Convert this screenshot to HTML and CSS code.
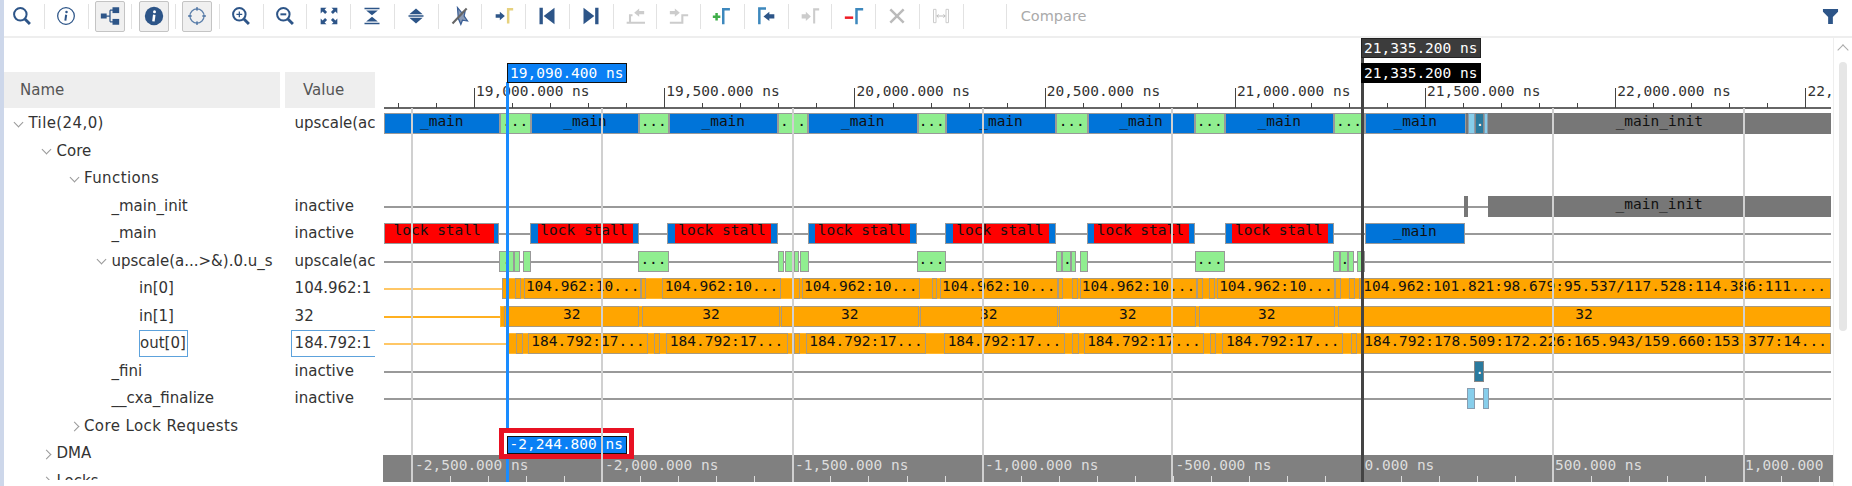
FILE: index.html
```html
<!DOCTYPE html>
<html lang="en">
<head>
  <meta charset="UTF-8">
  <title>Waveform</title>
  <link rel="stylesheet" href="styles.css">
</head>
<body>
  <div class="toolbar">
    <div class="tb first"><svg viewBox="0 0 24 24"><circle cx="10" cy="10" r="7.5" class="st"/><path d="M15.5 15.5l6 6" class="st thick"/></svg></div><i class="sep"></i>
    <div class="tb"><svg viewBox="0 0 24 24"><circle cx="12" cy="12" r="10" class="st thin"/><circle cx="12.6" cy="7.2" r="1.5" class="fl"/><path d="M12.2 10.5l-1 7" class="st"/></svg></div><i class="sep"></i>
    <div class="tb"><div class="on"><svg viewBox="0 0 24 24"><path d="M6 12h6M12 5v14M12 5h4M12 19h4" class="st thin"/><rect x="1" y="9" width="7" height="6" class="fl"/><rect x="15" y="1.500" width="8" height="7" class="fl"/><rect x="15" y="15.500" width="8" height="7" class="fl"/></svg></div></div><i class="sep"></i>
    <div class="tb"><div class="on"><svg viewBox="0 0 24 24"><circle cx="12" cy="12" r="11" class="fl"/><circle cx="12.6" cy="6.800" r="1.800" fill="#fff"/><path d="M12.300 10.500l-1 8" stroke="#fff" stroke-width="3" fill="none"/></svg></div></div><i class="sep"></i>
    <div class="tb"><div class="on"><svg viewBox="0 0 24 24"><circle cx="12" cy="12" r="8.500" class="st thin soft"/><path d="M12 1.500v4M12 18.500v4M1.500 12h4M18.500 12h4" class="st soft"/></svg></div></div><i class="sep"></i>
    <div class="tb"><svg viewBox="0 0 24 24"><circle cx="10" cy="10" r="7.500" class="st"/><path d="M15.500 15.500l6 6" class="st thick"/><path d="M10 6.500v7M6.500 10h7" class="st thin"/></svg></div><i class="sep"></i>
    <div class="tb"><svg viewBox="0 0 24 24"><circle cx="10" cy="10" r="7.500" class="st"/><path d="M15.500 15.500l6 6" class="st thick"/><path d="M6.500 10h7" class="st"/></svg></div><i class="sep"></i>
    <div class="tb"><svg viewBox="0 0 24 24"><path d="M2 2h7l-2.300 2.300 3 3-2.400 2.400-3-3L2 9zM22 2v7l-2.300-2.300-3 3-2.400-2.400 3-3L15 2zM2 22v-7l2.300 2.300 3-3 2.400 2.400-3 3L9 22zM22 22h-7l2.300-2.300-3-3 2.400-2.400 3 3L22 15z" class="fl"/></svg></div><i class="sep"></i>
    <div class="tb"><svg viewBox="0 0 24 24"><path d="M3 2h18v2H3zM5 5.500h14L12 11zM12 13l7 5.500H5zM3 20h18v2H3z" class="fl"/></svg></div><i class="sep"></i>
    <div class="tb"><svg viewBox="0 0 24 24"><path d="M12 3l8 7H4zM3 11h18v2H3zM4 14h16l-8 7z" class="fl"/></svg></div><i class="sep"></i>
    <div class="tb"><svg viewBox="0 0 24 24"><path d="M9 2l5 6 4-1-1 5 4 6-6-1-2 5-3-7z" fill="#8a9ab5" stroke="#3b5f96" stroke-width="1.500"/><path d="M3 21L20 3" stroke="#666" stroke-width="2.500"/></svg></div><i class="sep"></i>
    <div class="tb"><svg viewBox="0 0 24 24"><path d="M2 10h5V7l6 5-6 5v-3H2z" class="fl"/><path d="M17 21V4h6" fill="none" stroke="#e6d17e" stroke-width="3"/></svg></div><i class="sep"></i>
    <div class="tb"><svg viewBox="0 0 24 24"><path d="M3 2h4v20H3zM21 2v20L8 12z" class="fl"/></svg></div><i class="sep"></i>
    <div class="tb"><svg viewBox="0 0 24 24"><path d="M21 2h-4v20h4zM3 2v20l13-10z" class="fl"/></svg></div><i class="sep"></i>
    <div class="tb"><svg viewBox="0 0 24 24"><path d="M2 20h22M6 20v-9h3" fill="none" stroke="#ccc" stroke-width="2.500"/><path d="M23 6h-6V3l-6 5 6 5v-3h6z" fill="#ccc"/></svg></div><i class="sep"></i>
    <div class="tb"><svg viewBox="0 0 24 24"><path d="M1 20h15v-9h7" fill="none" stroke="#ccc" stroke-width="2.500"/><path d="M1 6h6V3l6 5-6 5v-3H1z" fill="#ccc"/></svg></div><i class="sep"></i>
    <div class="tb"><svg viewBox="0 0 24 24"><path d="M1 13h9M5.500 8.500v9" stroke="#3fae49" stroke-width="3" fill="none"/><path d="M13.500 22V4h8" fill="none" stroke="#3d88bd" stroke-width="3"/></svg></div><i class="sep"></i>
    <div class="tb"><svg viewBox="0 0 24 24"><path d="M4 22V3h8" fill="none" stroke="#3d88bd" stroke-width="3"/><path d="M22 10h-6V7l-7 5.500 7 5.500v-3h6z" class="fl"/></svg></div><i class="sep"></i>
    <div class="tb"><svg viewBox="0 0 24 24"><path d="M2 10h5V7l6 5.500-6 5.500v-3H2z" fill="#ccc"/><path d="M17 21V4h6" fill="none" stroke="#ccc" stroke-width="2.500"/></svg></div><i class="sep"></i>
    <div class="tb"><svg viewBox="0 0 24 24"><path d="M1 14h10" stroke="#ee1c25" stroke-width="3"/><path d="M15 22V4h8" fill="none" stroke="#3d88bd" stroke-width="3"/></svg></div><i class="sep"></i>
    <div class="tb"><svg viewBox="0 0 24 24"><path d="M4 4l16 16M20 4L4 20" stroke="#bbb" stroke-width="3"/></svg></div><i class="sep"></i>
    <div class="tb"><svg viewBox="0 0 24 24"><path d="M3 4h3v16H3zM18 4h3v16h-3z" fill="none" stroke="#ccc" stroke-width="1.200"/><path d="M7 12h10M9 10l-2 2 2 2M15 10l2 2-2 2" fill="none" stroke="#bbb" stroke-width="1.200"/></svg></div><i class="sep"></i>
    <div class="tb"></div><i class="sep"></i>
    <span class="compare">Compare</span>
    <svg class="filter" viewBox="0 0 18 18"><path d="M1 1h16v3l-5.500 5.500V17h-5V9.500L1 4z" class="fl"/></svg>
  </div>

  <div class="main">
    <div class="names">
      <div class="heads">
        <div class="head-name">Name</div>
        <div class="head-value">Value</div>
      </div>
      <div class="row"><div class="name lv0 wide"><span class="slot"><i class="chev"></i></span>Tile(24,0)</div><div class="value">upscale(ac</div></div>
      <div class="row"><div class="name lv1"><span class="slot"><i class="chev"></i></span>Core</div><div class="value"></div></div>
      <div class="row"><div class="name lv2 wide"><span class="slot"><i class="chev"></i></span>Functions</div><div class="value"></div></div>
      <div class="row"><div class="name lv3"><span class="slot"></span>_main_init</div><div class="value">inactive</div></div>
      <div class="row"><div class="name lv3"><span class="slot"></span>_main</div><div class="value">inactive</div></div>
      <div class="row"><div class="name lv2b"><span class="slot"><i class="chev"></i></span>upscale(a...&gt;&amp;).0.u_s</div><div class="value">upscale(ac</div></div>
      <div class="row"><div class="name lv4"><span class="slot"></span>in[0]</div><div class="value">104.962:1</div></div>
      <div class="row"><div class="name lv4"><span class="slot"></span>in[1]</div><div class="value">32</div></div>
      <div class="row"><div class="name lv4"><span class="slot"></span><span class="picked">out[0]</span></div><div class="value"><span class="picked-value">184.792:1</span></div></div>
      <div class="row"><div class="name lv3"><span class="slot"></span>_fini</div><div class="value">inactive</div></div>
      <div class="row"><div class="name lv3"><span class="slot"></span>__cxa_finalize</div><div class="value">inactive</div></div>
      <div class="row"><div class="name lv2 wide"><span class="slot"><i class="chev closed"></i></span>Core Lock Requests</div><div class="value"></div></div>
      <div class="row"><div class="name lv1"><span class="slot"><i class="chev closed"></i></span>DMA</div><div class="value"></div></div>
      <div class="row"><div class="name lv1"><span class="slot"><i class="chev closed"></i></span>Locks</div><div class="value"></div></div>
    </div>

    <div class="wave" id="wave">
      <div class="wave-head" id="waveHead"></div>
      <div id="tracks"></div>
      <div class="ruler" id="ruler"></div>
      <div class="cursor-blue"></div>
      <div class="cursor-black"></div>
      <div class="time time-blue">19,090.400 ns</div>
      <div class="time time-dark">21,335.200 ns</div>
      <div class="time time-black">21,335.200 ns</div>
      <div class="delta"><div class="delta-label">-2,244.800 ns</div></div>
    </div>

    <div class="scrollbar">
      <i class="up"></i>
      <div class="thumb"></div>
    </div>
  </div>

  <script src="script.js"></script>
</body>
</html>
```

FILE: styles.css
```css
body {
  margin: 0;
  height: 486px;
  overflow: hidden;
  border-left: 4px solid #cdd7ea;
  background-color: #fff;
  font-family: "DejaVu Sans", sans-serif;
  font-size: 15px;
  color: #333;
}

/* toolbar */
.toolbar {
  display: flex;
  align-items: center;
  height: 32px;
  margin-left: -3px;
  padding-right: 13px;
  padding-bottom: 4px;
  border-bottom: 2px solid #eee;
}

.tb {
  display: flex;
  align-items: center;
  justify-content: center;
  flex: none;
  width: 42.75px;
  height: 32px;
}

.tb svg {
  display: block;
  width: 20px;
  height: 20px;
}

.on {
  display: flex;
  align-items: center;
  justify-content: center;
  box-sizing: border-box;
  width: 30px;
  height: 31px;
  border: 1px solid #c4c4c4;
  border-radius: 2px;
  background-color: #f0f0f0;
}

.sep {
  flex: none;
  width: 1px;
  height: 25px;
  background-color: #e2e2e2;
}

.compare {
  margin-left: 13.500px;
  font-size: 14.500px;
  color: #aaa;
}

.filter {
  width: 17px;
  height: 17px;
  margin-left: auto;
}

.fl {
  fill: #2d5588;
}

.st {
  fill: none;
  stroke: #2d5588;
  stroke-width: 2.400;
}

.st.thin {
  stroke-width: 1.500;
}

.st.thick {
  stroke-width: 3.500;
}

.st.soft {
  stroke: #5d80ab;
}

/* main area */
.main {
  display: flex;
  height: 448px;
}

.names {
  flex: none;
  width: 379px;
  height: 442px;
  overflow: hidden;
}

.heads {
  display: flex;
  gap: 5px;
  height: 36px;
  margin-top: 34px;
  margin-bottom: 2.300px;
  line-height: 36px;
  color: #555;
}

.head-name {
  width: 260px;
  padding-left: 16px;
  background-color: #eee;
}

.head-value {
  width: 72px;
  padding-left: 18px;
  background-color: #eee;
}

.row {
  display: flex;
  gap: 5px;
  height: 27.500px;
  line-height: 27px;
  white-space: nowrap;
}

.name {
  display: flex;
  width: 276px;
  box-sizing: border-box;
  overflow: hidden;
}

.wide { letter-spacing: 0.400px; }

.lv0 { padding-left: 4.500px; }
.lv1 { padding-left: 32.500px; }
.lv2 { padding-left: 60px; }
.lv2b { padding-left: 87.500px; }
.lv3 { padding-left: 87.500px; }
.lv4 { padding-left: 115px; }

.slot {
  display: flex;
  align-items: center;
  justify-content: center;
  flex: none;
  width: 20px;
}

.chev {
  width: 6px;
  height: 6px;
  margin-top: -4px;
  border-right: 1.300px solid #999;
  border-bottom: 1.300px solid #999;
  transform: rotate(45deg);
}

.chev.closed {
  margin-top: 0;
  transform: rotate(-45deg);
}

.value {
  width: 90px;
  box-sizing: border-box;
  padding-left: 9.600px;
  overflow: hidden;
}

.picked {
  box-sizing: border-box;
  height: 27px;
  line-height: 25px;
  padding-right: 1px;
  border: 1px solid #5da2dc;
}

.value:has(.picked-value) {
  padding-left: 5.600px;
}

.picked-value {
  display: block;
  box-sizing: border-box;
  width: 90px;
  height: 27px;
  line-height: 25px;
  padding-left: 3px;
  border: 1px solid #5da2dc;
}

/* waveform */
.wave {
  position: relative;
  display: flex;
  flex-direction: column;
  flex: none;
  width: 1450px;
  height: 444px;
  overflow: hidden;
  font-family: "DejaVu Sans Mono", monospace;
  font-size: 14.500px;
  color: #111;
}

.wave-head {
  position: relative;
  flex: none;
  height: 72.300px;
}

.baseline {
  position: absolute;
  left: 1px;
  width: 1447px;
  top: 69px;
  height: 2px;
  background-color: #666;
}

.tick {
  position: absolute;
  top: 65px;
  width: 1px;
  height: 5px;
  background-color: #444;
}

.tick.major {
  top: 50px;
  height: 20px;
}

.tick-label {
  position: absolute;
  top: 44px;
  line-height: 18px;
  color: #333;
  white-space: nowrap;
}

.track {
  position: relative;
  height: 27.500px;
}

.line {
  position: absolute;
  top: 12.800px;
  height: 2px;
}

.seg {
  position: absolute;
  top: 3px;
  height: 21px;
  box-sizing: border-box;
  border: 1.500px solid #999;
  overflow: hidden;
  line-height: 15px;
  text-align: center;
  white-space: nowrap;
}

.seg.blue { background-color: #0074d9; }
.seg.green { background-color: #90ee90; }
.seg.gray { background-color: #777; border-color: #777; }
.seg.sky { background-color: #87ceeb; border-color: #889db0; }
.seg.teal { background-color: #2a7a9e; border-color: #888; color: #fff; }
.seg.orange { background-color: #ffa500; border-color: #a89a80; }
.seg.band { background-color: #ffa500; border-color: #ffb733; }

.stall {
  position: absolute;
  top: -1.500px;
  bottom: -1.500px;
  padding-right: 3px;
  border-top: 1.500px solid #999;
  border-bottom: 1.500px solid #999;
  box-sizing: border-box;
  line-height: 13px;
  background-color: #f00;
}

.ruler {
  position: relative;
  flex: none;
  margin-top: auto;
  height: 27.300px;
  background-color: #808080;
  color: #ddd;
}

.ruler-tick {
  position: absolute;
  bottom: 0;
  width: 1px;
  height: 6px;
  background-color: #ddd;
}

.ruler-label {
  position: absolute;
  top: 1px;
  line-height: 18px;
  white-space: nowrap;
}

.grid {
  position: absolute;
  top: 70px;
  bottom: 0;
  width: 2px;
  background-color: #d0d0d0;
}

.cursor-blue {
  position: absolute;
  left: 123px;
  top: 44px;
  bottom: 0;
  width: 3px;
  background-color: #1a8cff;
}

.cursor-black {
  position: absolute;
  left: 977.500px;
  top: 20px;
  bottom: 0;
  width: 3px;
  background-color: #444;
}

.time {
  position: absolute;
  box-sizing: border-box;
  width: 120px;
  height: 20px;
  padding-left: 2px;
  line-height: 18px;
  color: #fff;
  white-space: nowrap;
}

.time-blue {
  left: 124px;
  top: 25px;
  border: 1px solid #111;
  background-color: #0a80f5;
}

.time-dark {
  left: 978px;
  top: 0;
  border: 1px solid #222;
  background-color: #3c3c3c;
}

.time-black {
  left: 978px;
  top: 25px;
  border: 1px solid #000;
  background-color: #000;
}

.delta {
  position: absolute;
  left: 116px;
  top: 390px;
  box-sizing: border-box;
  width: 135px;
  height: 31px;
  padding: 2.500px 2.500px 0 2.500px;
  border: 5px solid #e81123;
  background-color: #fff;
}

.delta-label {
  box-sizing: border-box;
  height: 18px;
  padding-left: 2px;
  border: 1px solid #111;
  line-height: 14px;
  color: #fff;
  background-color: #0a80f5;
  white-space: nowrap;
}

/* scrollbar */
.scrollbar {
  display: flex;
  flex-direction: column;
  align-items: center;
  flex: 1;
  border-left: 1px solid #eee;
}

.up {
  width: 7px;
  height: 7px;
  margin-top: 8px;
  border-top: 1.500px solid #aaa;
  border-left: 1.500px solid #aaa;
  transform: rotate(45deg);
}

.thumb {
  width: 8px;
  height: 269px;
  margin-top: 8px;
  border-radius: 4px;
  background-color: #e6e6e6;
}
```

FILE: script.js
```js
// page x of the left edge of the wave panel
const X0 = 383;
const wave = document.getElementById('wave');
const waveHead = document.getElementById('waveHead');
const ruler = document.getElementById('ruler');
const tracksEl = document.getElementById('tracks');

function add(parent, cls, left, width, text) {
  const el = document.createElement('div');
  el.className = cls;
  el.style.left = (left - X0) + 'px';
  if (width !== null) el.style.width = width + 'px';
  if (text) el.textContent = text;
  parent.appendChild(el);
  return el;
}

// top time axis
const topLabels = ['19,000.000 ns', '19,500.000 ns', '20,000.000 ns', '20,500.000 ns', '21,000.000 ns', '21,500.000 ns', '22,000.000 ns', '22,'];
const baseline = document.createElement('div');
baseline.className = 'baseline';
waveHead.appendChild(baseline);
for (let i = 0; i < 38; i++) {
  const x = 398 + i * 38.04;
  const major = (i - 2) % 5 === 0;
  add(waveHead, major ? 'tick major' : 'tick', x, null);
  if (major) add(waveHead, 'tick-label', x + 2, null, topLabels[(i - 2) / 5]);
}

// [start, end, colour, label]
const orange = (list) => list.map(s => [s[0], s[1], 'orange', s[2]]);
const tracks = [
  { segs: [
    [384, 499.5, 'blue', '_main'], [499.5, 531, 'green', '...'], [531, 639, 'blue', '_main'], [639, 668.5, 'green', '...'],
    [668.5, 778, 'blue', '_main'], [778, 808, 'green', '. .'], [808, 917.5, 'blue', '_main'], [917.5, 946, 'green', '...'],
    [946, 1056, 'blue', '_main'], [1056, 1087.5, 'green', '...'], [1087.5, 1194.5, 'blue', '_main'], [1194.5, 1225, 'green', '...'],
    [1225, 1333.5, 'blue', '_main'], [1333.5, 1364.5, 'green', '...'], [1364.5, 1466, 'blue', '_main'], [1466, 1468, 'gray'],
    [1468, 1474.5, 'sky'], [1474.5, 1483.5, 'teal', '.'], [1483.5, 1488, 'sky'], [1488, 1830.6, 'gray', '_main_init']
  ] },
  {},
  {},
  { line: [384, 1830.6, '#999'], segs: [[1464, 1467.5, 'gray'], [1487.7, 1830.6, 'gray', '_main_init']] },
  { line: [384, 1830.6, '#999'], segs: [[1364.5, 1465.3, 'blue', '_main']],
    // outer start/end, then the red part inside
    stalls: [
      [384, 499.4, 384, 494.3], [530.3, 638.6, 538.5, 633.4], [667.4, 778, 676, 772], [807.8, 917.4, 815.7, 911],
      [945.4, 1056, 954, 1049.8], [1086.6, 1195, 1095, 1189.8], [1224.6, 1333.6, 1233, 1328.5]
    ] },
  { line: [384, 1830.6, '#999'], segs: [
    [499.3, 514.3, 'green', '.'], [514.3, 519.7, 'green'], [523.3, 531, 'green'], [638.3, 668.7, 'green', '...'],
    [778, 783.7, 'green'], [785, 794, 'green'], [794, 799, 'green'], [800, 808.6, 'green'], [917, 946, 'green', '...'],
    [1055.7, 1062, 'green'], [1062, 1070.8, 'green', '.'], [1070.8, 1076, 'green'], [1079.5, 1087.8, 'green'],
    [1194.5, 1225, 'green', '...'], [1333, 1339.5, 'green'], [1339.5, 1348, 'green', '.'], [1348, 1353.8, 'green'], [1357, 1364.9, 'green']
  ] },
  { line: [384, 502, '#ffc766'], segs: [[502, 1830.6, 'band']].concat(orange([
    [502, 507], [515.3, 521], [524.3, 641, '104.962:10...'], [641, 646], [661.5, 781.3, '104.962:10...'], [793, 800],
    [802, 919.7, '104.962:10...'], [931.6, 937.5], [939.5, 1058, '104.962:10...'], [1058, 1063.3], [1072, 1078],
    [1080, 1197, '104.962:10...'], [1197, 1202.5], [1209, 1215], [1217, 1334.8, '104.962:10...'], [1334.8, 1341],
    [1349.4, 1355.4], [1358.5, 1830.6, '104.962:101.821:98.679:95.537/117.528:114.386:111....']
  ])) },
  { line: [384, 501, '#ffb020'], segs: [[500, 1830.6, 'band']].concat(orange([
    [504, 639.3, '32'], [642, 780, '32'], [781, 918.5, '32'], [919.7, 1057.7, '32'],
    [1059.3, 1196, '32'], [1198.5, 1334.8, '32'], [1337.6, 1830.6, '32']
  ])) },
  { line: [384, 508, '#ffc766'], segs: [[508, 1830.6, 'band']].concat(orange([
    [516, 522.7], [528.3, 647.7, '184.792:17...'], [654.3, 660], [665.5, 787.6, '184.792:17...'], [794, 800],
    [805.8, 926.4, '184.792:17...'], [944, 1064.8, '184.792:17...'], [1072, 1078.7], [1083.8, 1204, '184.792:17...'],
    [1210.3, 1216.3], [1221.8, 1343.5, '184.792:17...'], [1350.6, 1357],
    [1360.5, 1830.6, '184.792:178.509:172.226:165.943/159.660:153.377:14...']
  ])) },
  { line: [384, 1830.6, '#999'], segs: [[1474.3, 1484, 'teal', '.']] },
  { line: [384, 1830.6, '#999'], segs: [[1466.7, 1475, 'sky'], [1483, 1489, 'sky']] }
];

tracks.forEach(t => {
  const row = document.createElement('div');
  row.className = 'track';
  tracksEl.appendChild(row);
  if (t.line) {
    const l = add(row, 'line', t.line[0], t.line[1] - t.line[0]);
    l.style.backgroundColor = t.line[2];
  }
  (t.stalls || []).forEach(s => {
    const outer = add(row, 'seg blue', s[0], s[1] - s[0]);
    const red = document.createElement('div');
    red.className = 'stall';
    red.style.left = (s[2] - s[0] - 1.5) + 'px';
    red.style.width = (s[3] - s[2]) + 'px';
    red.textContent = 'lock stall';
    outer.appendChild(red);
  });
  (t.segs || []).forEach(s => add(row, 'seg ' + s[2], s[0], s[1] - s[0], s[3]));
});

// bottom delta ruler
const rulerLabels = [[415, '-2,500.000 ns'], [605, '-2,000.000 ns'], [795, '-1,500.000 ns'], [985, '-1,000.000 ns'], [1175.5, '-500.000 ns'], [1364.5, '0.000 ns'], [1555, '500.000 ns'], [1745, '1,000.000']];
rulerLabels.forEach(r => add(ruler, 'ruler-label', r[0], null, r[1]));
for (let i = 0; i < 38; i++) {
  add(ruler, 'ruler-tick', 412 + i * 38.04, null);
}

// grid lines sit over the bars
[411, 601, 791.5, 981.5, 1171, 1551.5, 1742.5].forEach(x => add(wave, 'grid', x, null));
```
